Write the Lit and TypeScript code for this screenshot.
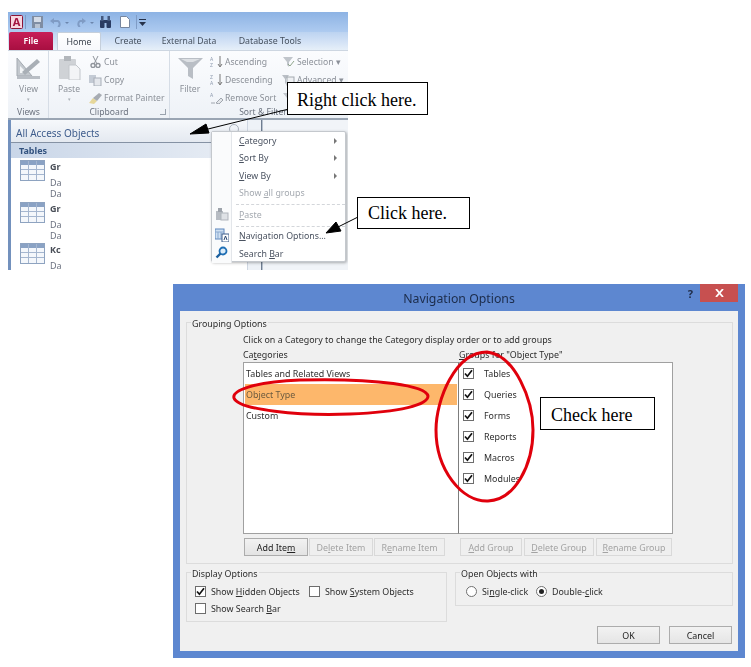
import { LitElement, html, css, svg } from "lit";
import { customElement } from "lit/decorators.js";

const tableIcon = html`<svg class="tbl" width="25" height="21" viewBox="0 0 25 21">
  <rect x=".5" y=".5" width="24" height="20" fill="#f4f7fb" stroke="#8ea3c0"/>
  <rect x="1" y="1" width="23" height="4" fill="#8aa2c4"/>
  <path d="M8.5 1v19M16.5 1v19M1 9.5h23M1 14.5h23" stroke="#a5b6cf" fill="none"/>
</svg>`;

const check = html`<span class="cb"><svg width="9" height="9" viewBox="0 0 9 9"><path d="M1 4.5 3.4 7.2 8 1.2" fill="none" stroke="#111" stroke-width="1.7"/></svg></span>`;
const uncheck = html`<span class="cb"></span>`;

@customElement("app-root")
export class AppRoot extends LitElement {
  static styles = css`
    :host { display: block; width: 751px; height: 667px; position: relative; overflow: hidden; background: #fff; font-family: "Noto Sans", sans-serif; }
    u { text-underline-offset: 1px; }

    /* ---------- Access window (cropped screenshot) ---------- */
    .access { position: absolute; left: 8px; top: 12px; width: 340px; height: 258px; overflow: hidden; display: flex; flex-direction: column; background: #fff; font-size: 8.6px; color: #8b9098; filter: blur(.35px); }
    .qat { height: 20px; flex: none; display: flex; align-items: center; padding-left: 2px; background: linear-gradient(#8db3e4, #aecbf0); }
    .qat svg { display: block; flex: none; }
    .qat svg:nth-child(2) { margin-left: 2px; }
    .qat svg:nth-child(3) { margin-left: 6px; }
    .qat svg:nth-child(4) { margin-left: 7px; }
    .qat svg:nth-child(5) { margin-left: 5px; }
    .qat svg:nth-child(6) { margin-left: 4px; }
    .qat svg:nth-child(7) { margin-left: 8px; }
    .qat svg:nth-child(8) { margin-left: 6px; }
    .qat svg:nth-child(9) { margin-left: 2px; }
    .tabs { height: 18px; flex: none; display: flex; align-items: flex-end; background: linear-gradient(#bcd3f1, #e6eff9); color: #45505e; font-size: 8.8px; }
    .tab { height: 18px; display: flex; align-items: center; justify-content: center; box-sizing: border-box; flex: none; }
    .file { width: 44px; margin-left: 1px; background: linear-gradient(#c81e57, #a80f41); color: #fff; font-weight: 600; border-radius: 2px 2px 0 0; }
    .home { width: 44px; margin-left: 4px; background: linear-gradient(#fff, #f7f9fc); border: 1px solid #c5cfdb; border-bottom: 0; border-radius: 2px 2px 0 0; color: #3d4550; }
    .create { width: 54px; }
    .external { width: 68px; font-size: 8.6px; }
    .db { width: 68px; margin-left: 13px; }

    .ribbon { height: 70px; flex: none; display: flex; padding-left: 1px; background: linear-gradient(#fbfcfe, #eef2f7); border-top: 1px solid #cdd6e1; border-bottom: 2px solid #9aa5b3; box-sizing: border-box; }
    .group { display: flex; flex-direction: column; flex: none; border-right: 1px solid #d6dde6; box-sizing: border-box; position: relative; }
    .g1 { width: 40px; } .g2 { width: 121px; } .g3 { flex: 1; border-right: 0; }
    .gbody { flex: 1; display: flex; padding-top: 1px; min-height: 0; }
    .glabel { height: 11px; flex: none; text-align: center; line-height: 10px; color: #6d7480; white-space: nowrap; }
    .g3 .glabel { width: 186px; }
    .launch { position: absolute; right: 3px; bottom: 3px; width: 5px; height: 5px; border-right: 1px solid #9aa3ae; border-bottom: 1px solid #9aa3ae; }
    .big { display: flex; flex-direction: column; align-items: center; width: 39px; flex: none; padding-top: 4px; }
    .big svg { display: block; height: 24px; flex: none; }
    .big .lbl { margin-top: 3px; line-height: 12px; }
    .big .drop { font-size: 5px; line-height: 8px; color: #aab0b8; }
    .g2 .big { width: 40px; }
    .g3 .big { width: 40px; }
    .col { display: flex; flex-direction: column; flex: none; padding-top: 1px; }
    .row { height: 18px; flex: none; display: flex; align-items: center; gap: 2px; white-space: nowrap; }
    .row svg { flex: none; display: block; }
    .g3 .col.a { width: 72px; }

    .panes { flex: 1; display: flex; min-height: 0; background: #fff; }
    .nav { width: 239px; flex: none; border-left: 3px solid #7391bd; box-sizing: border-box; display: flex; flex-direction: column; background: #fff; }
    .navhead { height: 23px; flex: none; box-sizing: border-box; padding-left: 5px; padding-top: 3px; display: flex; align-items: center; font-size: 10px; color: #3e5c8c; background: linear-gradient(#f6f8fb, #e4e9f0); border-bottom: 1px solid #8592a4; position: relative; }
    .chev { position: absolute; right: 8px; top: 4px; width: 10px; height: 10px; box-sizing: border-box; border: 1px solid #aab2bd; border-radius: 50%; }
    .cat { height: 15px; flex: none; box-sizing: border-box; padding-left: 8px; display: flex; align-items: center; font-weight: 700; font-size: 9px; color: #33537f; background: linear-gradient(90deg, #c9d6e8, #e9eef5); }
    .obj { height: 41.5px; flex: none; padding: 1px 0 0 9px; display: grid; grid-template-columns: 30px 1fr; grid-template-rows: 18px 11px 11px; font-size: 9px; color: #6c7280; box-sizing: border-box; }
    .obj svg { grid-row: 1 / span 2; display: block; margin-top: 1px; }
    .obj b { font-weight: 700; color: #4a4f58; line-height: 16px; }
    .obj span { grid-column: 2; line-height: 11px; height: 11px; }
    .split { width: 15px; flex: none; background: #eef2f7; border-right: 1px solid #6f7d90; border-left: 1px solid #cfd7e2; box-sizing: border-box; }
    .rest { flex: 1; background: #f1f4f8; border-left: 1px solid #b8c2cf; }

    .menu { position: absolute; left: 203px; top: 119px; width: 135px; height: 131px; box-sizing: border-box; background: #fff; border: 1px solid #c4c8cd; border-radius: 2px; box-shadow: 1px 1px 3px rgba(0,0,0,.3); display: grid; grid-template-columns: 20px 1fr; color: #4a5260; font-size: 8.8px; }
    .gutter { border-right: 1px solid #e3e6ea; display: flex; flex-direction: column; background: #fafbfc; }
    .gutter i { height: 17.5px; flex: none; display: flex; align-items: center; justify-content: center; }
    .gutter .spc { flex: none; height: 73px; }
    .gutter i.nv { margin-top: 3.5px; }
    .items { display: flex; flex-direction: column; }
    .mi { height: 17.5px; flex: none; display: flex; align-items: center; justify-content: space-between; padding: 0 8px 0 7px; white-space: nowrap; }
    .mi em { width: 0; height: 0; border-left: 3.5px solid #777; border-top: 3px solid transparent; border-bottom: 3px solid transparent; }
    .mi.off { color: #a4a9b0; }
    .sep { height: 0; flex: none; border-top: 1px dashed #d3d6da; margin: 2px 0 1px 4px; }

    /* ---------- Dialog ---------- */
    .dialog { position: absolute; left: 173px; top: 284px; width: 572px; height: 374px; box-sizing: border-box; background: #5d87d0; padding: 0 7px 7px; display: flex; flex-direction: column; font-size: 8.9px; color: #2d2d2d; filter: blur(.35px); }
    .titlebar { height: 27px; flex: none; display: flex; position: relative; align-items: center; justify-content: center; font-size: 12.3px; color: #1c2c4a; padding-top: 1px; box-sizing: border-box; }
    .help { position: absolute; right: 45px; top: 2px; font-weight: 700; font-size: 11px; color: #1e2b45; }
    .close { position: absolute; right: 0; top: 0; width: 38px; height: 18px; background: #c75050; color: #fff; display: flex; align-items: center; justify-content: center; }
    .body { flex: 1; background: #f0f0f0; padding: 11px 5px 0 6px; display: flex; flex-direction: column; min-height: 0; }
    .fs { border: 1px solid #dcdcdc; box-sizing: border-box; position: relative; }
    .legend { position: absolute; left: 4px; top: -6px; background: #f0f0f0; padding: 0 1px; line-height: 13px; color: #2d2d2d; white-space: nowrap; }
    .grouping { height: 242px; flex: none; padding: 10px 0 0 56px; display: flex; flex-direction: column; }
    .desc { height: 14px; line-height: 14px; white-space: nowrap; }
    .heads { display: grid; grid-template-columns: 216px 214px; height: 15px; line-height: 15px; white-space: nowrap; }
    .lists { display: grid; grid-template-columns: 215px 215px; height: 172px; flex: none; }
    .list { background: #fff; border: 1px solid #a0a0a0; border-right: 0; box-sizing: border-box; padding: 0 1px; }
    .list + .list { border-right: 1px solid #a0a0a0; border-left: 1px solid #7d7d7d; padding: 0; }
    .li { height: 21px; display: flex; align-items: center; padding-left: 1px; }
    .li.sel { background: #fdb76b; color: #6a5a3f; }
    .gi { height: 21px; display: flex; align-items: center; padding-left: 4px; gap: 10px; }
    .cb { width: 11px; height: 11px; flex: none; box-sizing: border-box; border: 1px solid #6d6d6d; background: #fff; display: inline-flex; align-items: center; justify-content: center; }
    .btnrow { display: flex; margin-top: 4px; height: 18px; }
    .btn { flex: none; height: 18px; box-sizing: border-box; border: 1px solid #d9d9d9; background: #efefef; color: #a3a3a3; display: flex; align-items: center; justify-content: center; white-space: nowrap; }
    .btn.on { background: linear-gradient(#f2f2f2, #e3e3e3); border-color: #acacac; color: #222; }
    .bottom { display: flex; margin-top: 8px; gap: 8px; align-items: flex-start; }
    .disp { width: 261px; height: 50px; flex: none; padding: 12px 0 0 8px; display: flex; flex-direction: column; gap: 4px; }
    .opt { display: flex; align-items: center; height: 13px; white-space: nowrap; }
    .opt .cb { margin-right: 5px; }
    .open { flex: 1; height: 34px; padding: 12px 0 0 10px; display: flex; align-items: flex-start; }
    .radio { width: 11px; height: 11px; flex: none; box-sizing: border-box; border: 1px solid #707070; border-radius: 50%; background: #fff; margin-right: 5px; display: inline-flex; align-items: center; justify-content: center; }
    .radio s { width: 5px; height: 5px; border-radius: 50%; background: #222; display: block; }
    .actions { display: flex; justify-content: flex-end; gap: 9px; padding-right: 1px; margin-top: 4px; }
    .actions .btn { width: 63px; background: linear-gradient(#f2f2f2, #e5e5e5); border-color: #acacac; color: #222; }

    /* ---------- Annotations ---------- */
    .overlay { position: absolute; left: 0; top: 0; pointer-events: none; }
    .note { position: absolute; box-sizing: border-box; background: #fff; border: 1px solid #000; color: #000; font-family: "Liberation Serif", serif; font-size: 18px; display: flex; align-items: center; white-space: nowrap; }
    .n1 { left: 287px; top: 82px; width: 141px; height: 33px; padding: 3px 0 0 9px; }
    .n2 { left: 357px; top: 197px; width: 113px; height: 32px; padding-left: 10px; }
    .n3 { left: 540px; top: 397px; width: 115px; height: 33px; padding: 3px 0 0 10px; }
  `;

  private ribbon() {
    return html`<div class="ribbon">
      <div class="group g1">
        <div class="gbody"><div class="big">
          <svg width="25" height="24" viewBox="0 0 25 24"><path d="M1 2v18l15-0z" fill="#c3c8ce" stroke="#a3a9b0"/><path d="M4 10v7h7z" fill="#f2f4f6"/><path d="M6 16 21 3l3 3-15 13z" fill="#a9afb6"/><rect x="1" y="20" width="23" height="3" fill="#b9bec5"/></svg>
          <span class="lbl">View</span><span class="drop">▾</span>
        </div></div>
        <div class="glabel">Views</div>
      </div>
      <div class="group g2">
        <div class="gbody">
          <div class="big">
            <svg width="23" height="24" viewBox="0 0 23 24"><rect x="1" y="3" width="17" height="20" rx="1" fill="#cfd2d6"/><rect x="6" y="0" width="7" height="5" fill="#b2b6bb"/><path d="M11 9h7l4 4v11H11z" fill="#f3f4f6" stroke="#c2c6cb"/></svg>
            <span class="lbl">Paste</span><span class="drop">▾</span>
          </div>
          <div class="col">
            <div class="row"><svg width="13" height="12" viewBox="0 0 13 12"><path d="M4 0l4 8M9 0 5 8" stroke="#8f949b" fill="none"/><circle cx="4" cy="9.5" r="2" fill="none" stroke="#8f949b" stroke-width="1.4"/><circle cx="9" cy="9.5" r="2" fill="none" stroke="#8f949b" stroke-width="1.4"/></svg>Cut</div>
            <div class="row"><svg width="13" height="12" viewBox="0 0 13 12"><rect x="0" y="1" width="7" height="8" fill="#c4cbd5"/><rect x="5" y="4" width="7" height="8" fill="#e4e7ec" stroke="#a7aeb8"/></svg>Copy</div>
            <div class="row"><svg width="13" height="12" viewBox="0 0 13 12"><path d="M0 11 4 6l4 3-3 3z" fill="#e6d79a"/><path d="M4 6 10 1l3 2-5 6z" fill="#a7acb3"/></svg>Format Painter</div>
          </div>
        </div>
        <div class="glabel">Clipboard</div>
        <span class="launch"></span>
      </div>
      <div class="group g3">
        <div class="gbody">
          <div class="big">
            <svg width="25" height="24" viewBox="0 0 25 24"><path d="M0 2h25L15 12v11l-5-3v-8z" fill="#b9bec5"/><path d="M3 3h19l-7 3h-6z" fill="#dde0e4"/></svg>
            <span class="lbl">Filter</span>
          </div>
          <div class="col a">
            <div class="row"><svg width="13" height="12" viewBox="0 0 13 12"><text x="0" y="5" font-size="5" fill="#8c99ad">A</text><text x="0" y="11" font-size="5" fill="#8c99ad">Z</text><path d="M10 0v10M8 8l2 3 2-3" stroke="#777" fill="none"/></svg>Ascending</div>
            <div class="row"><svg width="13" height="12" viewBox="0 0 13 12"><text x="0" y="5" font-size="5" fill="#8c99ad">Z</text><text x="0" y="11" font-size="5" fill="#8c99ad">A</text><path d="M10 0v10M8 8l2 3 2-3" stroke="#777" fill="none"/></svg>Descending</div>
            <div class="row"><svg width="13" height="12" viewBox="0 0 13 12"><text x="0" y="5" font-size="5" fill="#8c99ad">A</text><path d="M1 11h4M6 11l5-5 2 2-4 4z" stroke="#a0a6ae" fill="#e3e6ea"/></svg>Remove Sort</div>
          </div>
          <div class="col">
            <div class="row"><svg width="13" height="12" viewBox="0 0 13 12"><path d="M1 1h10L7 6v5L5 9V6z" fill="#c0c5cb"/><path d="M6 8l2 2 4-5" stroke="#8fa58a" fill="none"/></svg>Selection ▾</div>
            <div class="row"><svg width="13" height="12" viewBox="0 0 13 12"><path d="M0 1h7L4 5v5L3 9V5z" fill="#b9bec5"/><rect x="5" y="3" width="7" height="8" fill="#eef0f3" stroke="#a3a9b0"/></svg>Advanced ▾</div>
            <div class="row"><svg width="13" height="12" viewBox="0 0 13 12"><path d="M1 1h10L7 6v5L5 9V6z" fill="#c0c5cb"/></svg></div>
          </div>
        </div>
        <div class="glabel">Sort &amp; Filter</div>
      </div>
    </div>`;
  }

  private menu() {
    return html`<div class="menu">
      <div class="gutter">
        <div class="spc"></div>
        <i><svg width="14" height="14" viewBox="0 0 14 14"><rect x="1" y="4" width="7" height="9" fill="#b7bcc3"/><rect x="3" y="1" width="4" height="4" fill="#9da3ab"/><rect x="6" y="6" width="7" height="7" fill="#dfe2e6" stroke="#b0b5bc"/></svg></i>
        <i class="nv"><svg width="14" height="14" viewBox="0 0 14 14"><rect x="0" y="1" width="9" height="10" fill="#cfe0f2" stroke="#5d86bb"/><path d="M0 4h9M3 4v7M6 4v7" stroke="#8ba9cf"/><rect x="7" y="6" width="7" height="8" fill="#fff" stroke="#3f5f8c"/><path d="M9 12l1.5-4 1.5 4" stroke="#27456f" fill="none"/></svg></i>
        <i><svg width="13" height="13" viewBox="0 0 13 13"><circle cx="8" cy="5" r="3.5" fill="#dcecf9" stroke="#1f6fb5" stroke-width="1.8"/><path d="M5.5 7.5 1.5 11.5" stroke="#1b5f9e" stroke-width="2.4"/></svg></i>
      </div>
      <div class="items">
        <div class="mi"><span><u>C</u>ategory</span><em></em></div>
        <div class="mi"><span><u>S</u>ort By</span><em></em></div>
        <div class="mi"><span><u>V</u>iew By</span><em></em></div>
        <div class="mi off"><span>Show <u>a</u>ll groups</span></div>
        <div class="sep"></div>
        <div class="mi off"><span><u>P</u>aste</span></div>
        <div class="sep"></div>
        <div class="mi"><span><u>N</u>avigation Options...</span></div>
        <div class="mi"><span>Search <u>B</u>ar</span></div>
      </div>
    </div>`;
  }

  private accessWindow() {
    const objs = [["Gr", 2], ["Gr", 2], ["Kc", 1]] as const;
    return html`<div class="access">
      <div class="qat">
        <svg width="13" height="14" viewBox="0 0 13 14"><rect x=".5" y=".5" width="12" height="13" rx="1" fill="#f7d6e0" stroke="#8c1538"/><text x="6.5" y="11" font-size="11" font-weight="700" text-anchor="middle" fill="#a4123f" font-family="Noto Sans">A</text></svg>
        <svg width="1" height="14"><rect width="1" height="14" fill="#7f9cc6"/></svg>
        <svg width="11" height="12" viewBox="0 0 11 12"><rect width="11" height="12" fill="#7f8da3"/><rect x="2" y="1" width="7" height="5" fill="#d4dbe6"/><rect x="3" y="8" width="5" height="4" fill="#b8c2d1"/></svg>
        <svg width="20" height="10" viewBox="0 0 20 10"><path d="M2 4h6a3.5 3.5 0 0 1 0 6" fill="none" stroke="#7f9bc4" stroke-width="2"/><path d="M0 4l4-3v6z" fill="#7f9bc4"/><path d="M15 5h4l-2 2z" fill="#6c86ad"/></svg>
        <svg width="20" height="10" viewBox="0 0 20 10"><path d="M9 4H5a3.5 3.5 0 0 0 0 6" fill="none" stroke="#7f9bc4" stroke-width="2"/><path d="M11 4 7 1v6z" fill="#7f9bc4"/><path d="M15 5h4l-2 2z" fill="#6c86ad"/></svg>
        <svg width="13" height="12" viewBox="0 0 13 12"><rect x="1" y="4" width="4.5" height="8" rx="1" fill="#2a3c63"/><rect x="7.5" y="4" width="4.5" height="8" rx="1" fill="#2a3c63"/><rect x="2" y="0" width="2.5" height="5" fill="#44597f"/><rect x="8.5" y="0" width="2.5" height="5" fill="#44597f"/><rect x="5" y="4" width="3" height="3" fill="#2a3c63"/></svg>
        <svg width="10" height="12" viewBox="0 0 10 12"><path d="M.5.5h6l3 3v8h-9z" fill="#fff" stroke="#76869f"/></svg>
        <svg width="1" height="14"><rect width="1" height="14" fill="#7f9cc6"/></svg>
        <svg width="7" height="9" viewBox="0 0 7 9"><rect y="1" width="7" height="1" fill="#26324a"/><path d="M0 4h7L3.5 8z" fill="#26324a"/></svg>
      </div>
      <div class="tabs">
        <div class="tab file">File</div>
        <div class="tab home">Home</div>
        <div class="tab create">Create</div>
        <div class="tab external">External Data</div>
        <div class="tab db">Database Tools</div>
      </div>
      ${this.ribbon()}
      <div class="panes">
        <div class="nav">
          <div class="navhead">All Access Objects<span class="chev"></span></div>
          <div class="cat">Tables</div>
          ${objs.map(([n, c]) => html`<div class="obj">${tableIcon}<b>${n}</b>${Array.from({ length: c }, () => html`<span>Da</span>`)}</div>`)}
        </div>
        <div class="split"></div>
        <div class="rest"></div>
      </div>
      ${this.menu()}
    </div>`;
  }

  private dialog() {
    const groups = ["Tables", "Queries", "Forms", "Reports", "Macros", "Modules"];
    return html`<div class="dialog">
      <div class="titlebar">Navigation Options<span class="help">?</span>
        <span class="close"><svg width="9" height="8" viewBox="0 0 9 8"><path d="M1 0 8 8M8 0 1 8" stroke="#fff" stroke-width="1.8"/></svg></span>
      </div>
      <div class="body">
        <div class="fs grouping">
          <span class="legend">Grouping Options</span>
          <div class="desc">Click on a Category to change the Category display order or to add groups</div>
          <div class="heads"><span>Ca<u>t</u>egories</span><span><u>G</u>roups for "Object Type"</span></div>
          <div class="lists">
            <div class="list">
              <div class="li">Tables and Related Views</div>
              <div class="li sel">Object Type</div>
              <div class="li">Custom</div>
            </div>
            <div class="list">
              ${groups.map((g) => html`<div class="gi">${check}<span>${g}</span></div>`)}
            </div>
          </div>
          <div class="btnrow">
            <div class="btn on" style="width:64px;margin-left:1px">Add Ite<u>m</u></div>
            <div class="btn" style="width:64px;margin-left:1px">De<u>l</u>ete Item</div>
            <div class="btn" style="width:71px;margin-left:1px">R<u>e</u>name Item</div>
            <div class="btn" style="width:62px;margin-left:15px"><u>A</u>dd Group</div>
            <div class="btn" style="width:70px;margin-left:2px"><u>D</u>elete Group</div>
            <div class="btn" style="width:76px;margin-left:2px"><u>R</u>ename Group</div>
          </div>
        </div>
        <div class="bottom">
          <div class="fs disp">
            <span class="legend">Display Options</span>
            <div class="opt">${check}<span style="width:98px">Show <u>H</u>idden Objects</span>${uncheck}<span>Show <u>S</u>ystem Objects</span></div>
            <div class="opt">${uncheck}<span>Show Search <u>B</u>ar</span></div>
          </div>
          <div class="fs open">
            <span class="legend">Open Objects with</span>
            <div class="opt"><span class="radio"></span><span style="width:54px">Si<u>n</u>gle-click</span><span class="radio"><s></s></span><span>Double-<u>c</u>lick</span></div>
          </div>
        </div>
        <div class="actions"><div class="btn">OK</div><div class="btn">Cancel</div></div>
      </div>
    </div>`;
  }

  render() {
    return html`
      ${this.accessWindow()}
      ${this.dialog()}
      <svg class="overlay" width="751" height="667" viewBox="0 0 751 667">
        ${svg`
          <path d="M297 107 204 130" stroke="#000" fill="none"/>
          <path d="M190 134 206 124 209 133z" fill="#000" stroke="#000"/>
          <path d="M366 213 338 227" stroke="#000" fill="none"/>
          <path d="M326 233 336 222 341 231z" fill="#000" stroke="#000"/>
          <path d="M300 380C252 382 232 391 234 398 238 410 300 416 350 414 400 412 428 405 428 396 426 386 380 378 300 380Z" fill="none" stroke="#e0000c" stroke-width="3"/>
          <path d="M487 352C455 352 436 400 436 430 436 470 462 502 488 501 515 500 533 465 533 430 533 400 515 355 487 352Z" fill="none" stroke="#e0000c" stroke-width="3"/>
        `}
      </svg>
      <div class="note n1">Right click here.</div>
      <div class="note n2">Click here.</div>
      <div class="note n3">Check here</div>
    `;
  }
}
